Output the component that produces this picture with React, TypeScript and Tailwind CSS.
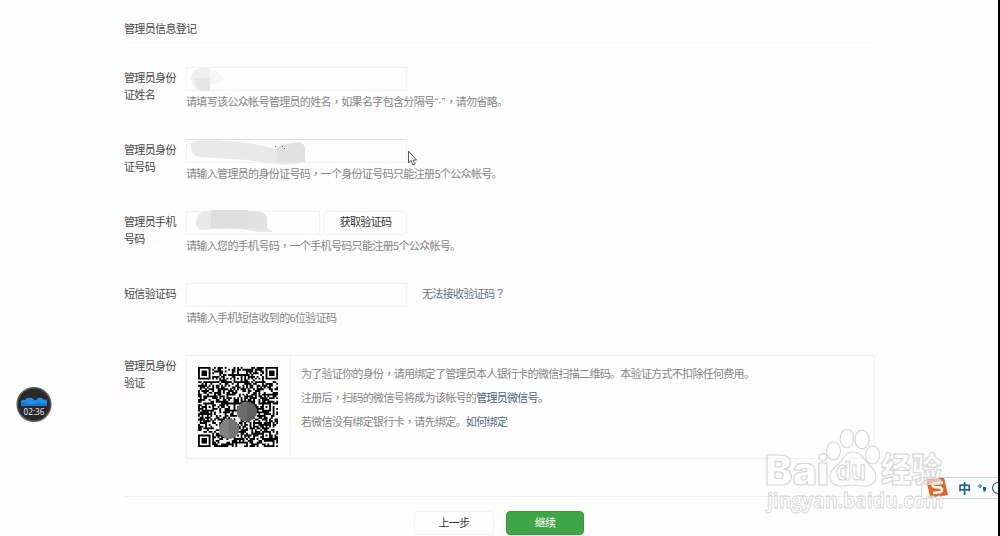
import type { ReactNode } from "react";

const QR_SIZE = 45;

// Version 7 layout: three finder squares, alignment marks, pseudo random data
function buildQrPath() {
  const finders = [[0, 0], [QR_SIZE - 7, 0], [0, QR_SIZE - 7]];
  const marks = [[6, 22], [22, 6], [22, 22], [22, 38], [38, 22], [38, 38]];
  let seed = 20177;
  let d = "";
  for (let y = 0; y < QR_SIZE; y++) {
    for (let x = 0; x < QR_SIZE; x++) {
      seed = (seed * 1103515245 + 12345) % 2147483648;
      let dark = (seed >> 12) % 100 < 54;
      if (x === 6 || y === 6) dark = (x + y) % 2 === 0;
      for (const [fx, fy] of finders) {
        const r = Math.max(Math.abs(x - fx - 3), Math.abs(y - fy - 3));
        if (r <= 4) dark = r === 3 || r <= 1;
      }
      for (const [mx, my] of marks) {
        const r = Math.max(Math.abs(x - mx), Math.abs(y - my));
        if (r <= 2) dark = r !== 1;
      }
      if (dark) d += `M${x} ${y}h1.05v1.05h-1.05z`;
    }
  }
  return d;
}

const qrPath = buildQrPath();

function QrCode() {
  return (
    <svg className="h-20 w-20" viewBox="0 0 80 80">
      <path d={qrPath} transform="scale(1.7778)" fill="#000" />
      <circle cx="48.5" cy="44.5" r="10" fill="#6d6d6d" />
      <path d="M49 34.5a10 10 0 0 1 0 20z" fill="#606060" />
      <circle cx="31" cy="62" r="10" fill="#818181" />
      <path d="M31 52a10 10 0 0 1 0 20z" fill="#747474" />
    </svg>
  );
}

// Commas and question marks sit in the middle of their cell
function Copy({ text }: { text: string }) {
  return (
    <>
      {text.split(/([，？])/).map((part, i) =>
        part === "，" || part === "？" ? (
          <span key={i} lang="zh-TW" className="font-['Noto_Sans_CJK_TC',sans-serif]">{part}</span>
        ) : (
          part
        ),
      )}
    </>
  );
}

type FieldProps = { label: string[]; hint: ReactNode; children: ReactNode };

function Field({ label, hint, children }: FieldProps) {
  return (
    <div className="flex h-[72px]">
      <Label lines={label} />
      <div>
        <div className="flex h-6 items-center">{children}</div>
        <p className="mt-0.5 whitespace-nowrap leading-4 text-[#858585]">{hint}</p>
      </div>
    </div>
  );
}

function Label({ lines }: { lines: string[] }) {
  return (
    <div className="w-[62px] shrink-0 pt-[2px] leading-[17px] text-[#484848]">
      {lines.map((line) => (
        <div key={line} className="whitespace-nowrap">{line}</div>
      ))}
    </div>
  );
}

function InputBox({ className = "w-[221px]", children }: { className?: string; children?: ReactNode }) {
  return (
    <div className={`h-6 border border-[#f3f3f3] bg-[#fefefe] ${className}`}>{children}</div>
  );
}

function Watermark() {
  return (
    <svg className="pointer-events-none absolute left-[760px] top-[420px]" width="195" height="100" viewBox="0 0 195 100">
      <g fill="#fff" fillOpacity="0.5" stroke="#d6d6d6" strokeWidth="1.1">
        <text x="5" y="65" fontSize="41" fontWeight="900" fontFamily="Inter, sans-serif" letterSpacing="0" textLength="64" lengthAdjust="spacingAndGlyphs">Bai</text>
        <ellipse cx="73.5" cy="31" rx="7" ry="9" />
        <ellipse cx="87" cy="18.5" rx="6.8" ry="9.3" />
        <ellipse cx="102" cy="19.5" rx="7" ry="9.3" />
        <ellipse cx="112.5" cy="35" rx="7" ry="9" />
        <path d="M93 32c-6 0-8 3-11 8c-5 7-12 9-12 17c0 6 5 9 11 9c5 0 8-1 12-1s8 1 13 1c6 0 10-4 10-9c0-8-6-10-11-17c-4-5-6-8-12-8z" />
        <text x="76" y="60" fontSize="26" fontWeight="700" fontFamily="Inter, sans-serif" letterSpacing="0" textLength="30" lengthAdjust="spacingAndGlyphs">du</text>
        <text x="121" y="62" fontSize="34" fontWeight="900" fontFamily="Noto Sans CJK SC, sans-serif" letterSpacing="0" textLength="61" lengthAdjust="spacingAndGlyphs">经验</text>
        <text x="7" y="88" fontSize="21" fontWeight="700" fontFamily="Open Sans, sans-serif" letterSpacing="0" textLength="177" lengthAdjust="spacingAndGlyphs" strokeWidth="0.9">jingyan.baidu.com</text>
      </g>
    </svg>
  );
}

function ImeBar() {
  return (
    <div className="absolute left-[921px] top-[477px] flex h-[22px] w-[77px] items-center overflow-hidden border border-r-0 border-[#cbd5dc] bg-[#fdfefe] font-bold text-[#1f6289]">
      <svg className="ml-[3px] shrink-0" width="24" height="22" viewBox="0 0 24 22">
        <path d="M1 2.5L19 0.500L23 18L5.500 21Z" fill="#e2682a" />
        <path d="M18 5.500L9 6.500Q6 8 9 10L15.500 10.500Q18.500 13 15.500 15L8 16" fill="none" stroke="#fff" strokeWidth="2.6" />
      </svg>
      <span className="ml-[9px] text-[13px] tracking-normal">中</span>
      <svg className="ml-1.5 shrink-0" width="24" height="20" viewBox="0 0 24 20">
        <circle cx="3" cy="8" r="1.3" fill="none" stroke="#1f6289" />
        <path d="M6 9h3v2q0 3-3 3l1-2H6z" fill="#1f6289" />
        <circle cx="21" cy="10" r="5.5" fill="none" stroke="#1f6289" strokeWidth="1.2" />
      </svg>
    </div>
  );
}

function RecorderBadge() {
  return (
    <div className="absolute left-4 top-[387px]">
      <svg width="36" height="36" viewBox="0 0 36 36">
        <circle cx="18" cy="17.500" r="16.800" fill="#292929" stroke="#5d5d5d" strokeWidth="1.5" />
        <path d="M5 14Q7 12 9 13Q11 10 14 11Q16 10 18 13Q20 14 22 11Q26 10 28 13Q30 11 31 14V19H5z" fill="#258de4" />
        <path d="M5 17Q8 14 11 16T18 17T25 16T31 17V19H5z" fill="#1678d0" />
        <text x="18" y="28" textAnchor="middle" fontSize="8.2" letterSpacing="0" fontFamily="Open Sans, sans-serif" fill="#f5f5f5">02:36</text>
      </svg>
    </div>
  );
}

export default function App() {
  return (
    <div className="relative h-[536px] w-[1000px] overflow-hidden border-r-2 border-black bg-[#fdfdfd] font-['Noto_Sans_CJK_SC',sans-serif] text-[11px] tracking-[-0.65px]">
      <main className="ml-[124px] w-[751px]">
        <h1 className="h-[43px] border-b border-[#f9f9f9] pt-[19px] leading-[18px] text-[#484848]">管理员信息登记</h1>

        <form className="pt-6">
          <Field
            label={["管理员身份", "证姓名"]}
            hint={
              <>
                <Copy text="请填写该公众帐号管理员的姓名，如果名字包含分隔号" />
                <span className="font-['Liberation_Sans',sans-serif] tracking-normal">“·”</span>
                <Copy text="，请勿省略。" />
              </>
            }
          >
            <InputBox>
              <svg width="60" height="24" viewBox="0 0 60 24">
                <path d="M4 11Q4 1 14 0H23V23H16Q6 23 4 11z" fill="#efefef" />
                <path d="M7 10H23V23H15Q9 20 7 10z" fill="#e6e6e6" />
                <path d="M23 1Q34 4 37 12Q36 16 23 16z" fill="#f7f7f7" />
              </svg>
            </InputBox>
          </Field>

          <Field
            label={["管理员身份", "证号码"]}
            hint={<Copy text="请输入管理员的身份证号码，一个身份证号码只能注册5个公众帐号。" />}
          >
            <InputBox className="w-[221px] border-t-[#dedede]">
              <svg className="-mt-px overflow-visible" width="130" height="26" viewBox="0 0 130 26">
                <path d="M4 4Q8 1 28 1L62 4L90 10Q98 3 112 3Q118 6 118 12V22Q108 27 90 25L60 21L12 18Q3 16 4 4z" fill="#e9e9e9" />
                <path d="M90 8L106 4Q118 1 118 11V23H90z" fill="#e1e1e1" />
                <path d="M88 7h1v1h-1zM95 7h1v1h-1zM97 9h1v1h-1z" fill="#666" />
              </svg>
            </InputBox>
          </Field>

          <Field
            label={["管理员手机", "号码"]}
            hint={<Copy text="请输入您的手机号码，一个手机号码只能注册5个公众帐号。" />}
          >
            <InputBox className="w-[134px]">
              <svg className="-mt-0.5 overflow-visible" width="90" height="24" viewBox="0 0 90 24">
                <path d="M9 11Q11 0 27 0L68 1Q80 2 80 8V18L86 22H70L50 18L15 20Q8 18 9 11z" fill="#e9e9e9" />
                <path d="M24 0H61V19L24 18z" fill="#dedede" />
                <path d="M61 1Q80 1 80 9V20L61 18z" fill="#e2e2e2" />
              </svg>
            </InputBox>
            <button type="button" className="ml-1 h-6 w-[83px] rounded-sm border border-[#f3f3f3] bg-[#fefefe] pb-[3px] text-[#333]">
              获取验证码
            </button>
          </Field>

          <Field label={["短信验证码"]} hint="请输入手机短信收到的6位验证码">
            <InputBox />
            <a className="ml-[15px] whitespace-nowrap pb-[3px] text-[#647184]"><Copy text="无法接收验证码？" /></a>
          </Field>

          <div className="flex h-[142px] border-b border-[#f0f0f0]">
            <Label lines={["管理员身份", "验证"]} />
            <div className="flex h-[104px] w-[689px] border border-[#f0f0f0] bg-[#fefefe]">
              <div className="flex w-[104px] items-start border-r border-[#f0f0f0] pl-[11px] pt-[11px]">
                <QrCode />
              </div>
              <div className="whitespace-nowrap pl-2.5 pt-[5px] leading-6 tracking-[-0.7px] text-[#858585]">
                <p><Copy text="为了验证你的身份，请用绑定了管理员本人银行卡的微信扫描二维码。本验证方式不扣除任何费用。" /></p>
                <p><Copy text="注册后，扫码的微信号将成为该帐号的" /><span className="text-[#4c617f]">管理员微信号。</span></p>
                <p><Copy text="若微信没有绑定银行卡，请先绑定。" /><a className="text-[#566780]">如何绑定</a></p>
              </div>
            </div>
          </div>

          <div className="flex gap-3 pl-[290px] pt-3.5">
            <button type="button" className="h-6 w-20 rounded-sm border border-[#f3f3f3] bg-[#fefefe] pb-px text-[#333]">上一步</button>
            <button type="button" className="h-6 w-[78px] rounded-sm border border-[#379b3c] bg-[#3fa647] pb-px text-white">继续</button>
          </div>
        </form>
      </main>

      <RecorderBadge />
      <ImeBar />
      <Watermark />

      <svg className="absolute left-[407px] top-[150px]" width="11" height="16" viewBox="0 0 11 16">
        <path d="M1.5 1V13L4 10.5L6 15L8 14L6 10H9.5z" fill="#fff" stroke="#555" strokeWidth="1" />
      </svg>
    </div>
  );
}
